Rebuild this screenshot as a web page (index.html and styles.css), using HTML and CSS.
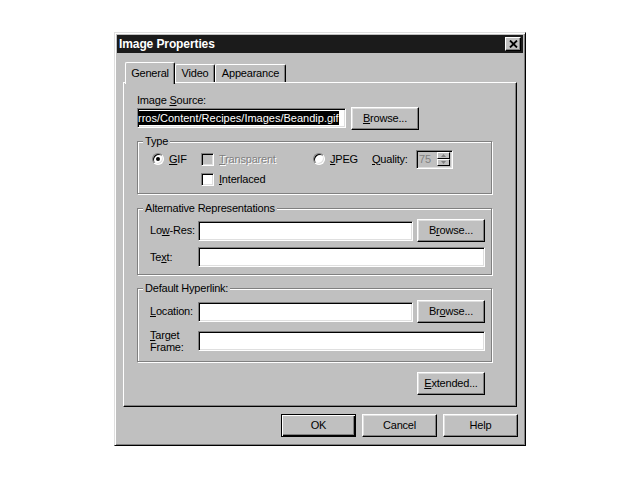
FILE: index.html
```html
<!DOCTYPE html>
<html>
<head>
<meta charset="utf-8">
<title>Image Properties</title>
<link rel="stylesheet" href="styles.css">
</head>
<body>
<div class="dialog">
  <div class="titlebar">
    <span class="title">Image Properties</span>
    <span class="close"><svg width="9" height="8" viewBox="0 0 9 8"><path d="M1 0.5 L8 7.5 M8 0.5 L1 7.5" stroke="#000" stroke-width="1.8" fill="none"/></svg></span>
  </div>
  <div class="main">
    <div class="tabs">
      <div class="tab active t-gen">General</div>
      <div class="tab t-vid">Video</div>
      <div class="tab t-app">Appearance</div>
    </div>
    <div class="panel">
      <div class="label-line">Image <u>S</u>ource:</div>
      <div class="src-row">
        <div class="edit src"><span class="sel">rros/Content/Recipes/Images/Beandip.gif</span></div>
        <div class="btn"><span><u>B</u>rowse...</span></div>
      </div>

      <div class="group g-type">
        <div class="legend">Type</div>
        <div class="trow r1">
          <div class="cell c1"><span class="radio on"></span><span><u>G</u>IF</span></div>
          <div class="cell c2"><span class="check disabled"></span><span class="dis-text"><u>T</u>ransparent</span></div>
          <div class="cell c3"><span class="radio"></span><span><u>J</u>PEG</span></div>
          <div class="cell c4"><span><u>Q</u>uality:</span></div>
          <div class="spin">
            <span class="spin-val">75</span>
            <span class="spin-btns">
              <span class="sb"><svg width="5" height="3" viewBox="0 0 5 3"><path d="M2.5 0 L5 3 L0 3 Z" fill="#808080"/></svg></span>
              <span class="sb"><svg width="5" height="3" viewBox="0 0 5 3"><path d="M0 0 L5 0 L2.5 3 Z" fill="#808080"/></svg></span>
            </span>
          </div>
        </div>
        <div class="trow r2">
          <div class="cell c1"></div>
          <div class="cell c2"><span class="check"></span><span><u>I</u>nterlaced</span></div>
        </div>
      </div>

      <div class="group g-alt">
        <div class="legend">Alternative Representations</div>
        <div class="frow fr1">
          <div class="flabel">Lo<u>w</u>-Res:</div>
          <div class="edit e-short"></div>
          <div class="btn"><span>B<u>r</u>owse...</span></div>
        </div>
        <div class="frow fr2">
          <div class="flabel">Te<u>x</u>t:</div>
          <div class="edit e-long"></div>
        </div>
      </div>

      <div class="group g-link">
        <div class="legend">Default Hyperlink:</div>
        <div class="frow fr1">
          <div class="flabel"><u>L</u>ocation:</div>
          <div class="edit e-short"></div>
          <div class="btn"><span>Br<u>o</u>wse...</span></div>
        </div>
        <div class="frow fr2 tall">
          <div class="flabel two"><u>T</u>arget<br>Frame:</div>
          <div class="edit e-long"></div>
        </div>
      </div>

      <div class="btn extended"><span><u>E</u>xtended...</span></div>
    </div>
    <div class="buttons">
      <div class="btn big default"><span>OK</span></div>
      <div class="btn big"><span>Cancel</span></div>
      <div class="btn big"><span>Help</span></div>
    </div>
  </div>
</div>
</body>
</html>
```
FILE: styles.css
```css
body {
  margin: 0;
  background: #fff;
  font-family: "Liberation Sans", Arial, sans-serif;
  font-size: 11px;
  line-height: 13px;
  letter-spacing: -0.2px;
  color: #000;
}

.dialog {
  box-sizing: border-box;
  width: 412px;
  height: 414px;
  margin: 32px 0 0 114px;
  background: #c0c0c0;
  border: 1px solid;
  border-color: #dfdfdf #000 #000 #dfdfdf;
  box-shadow: inset 1px 1px #fff, inset -1px -1px #808080;
  padding: 2px;
  display: flex;
  flex-direction: column;
}

.titlebar {
  height: 18px;
  background: #1b1b1b;
  color: #fff;
  display: flex;
  align-items: center;
  justify-content: space-between;
  padding: 0 2px;
  font-weight: bold;
  font-size: 12px;
  letter-spacing: -0.1px;
}

.close {
  box-sizing: border-box;
  width: 16px;
  height: 14px;
  background: #c0c0c0;
  border: 1px solid;
  border-color: #fff #000 #000 #fff;
  box-shadow: inset -1px -1px #808080;
  display: flex;
  align-items: center;
  justify-content: center;
}

.main {
  padding: 0 6px;
  display: flex;
  flex-direction: column;
}

.tabs {
  display: flex;
  align-items: flex-end;
  height: 20px;
  margin-top: 9px;
  padding-left: 2px;
}

.tab {
  box-sizing: border-box;
  height: 18px;
  padding-top: 2px;
  text-align: center;
  background: #c0c0c0;
  border-top: 1px solid #fff;
  border-left: 1px solid #fff;
  border-right: 1px solid #000;
  box-shadow: inset -1px 0 #808080;
  border-radius: 2px 2px 0 0;
}

.tab.active {
  height: 22px;
  margin-bottom: -2px;
  padding-top: 4px;
  position: relative;
  z-index: 1;
}

.t-gen { width: 50px; }
.t-vid { width: 40px; }
.t-app { width: 71px; }

.panel {
  box-sizing: border-box;
  height: 325px;
  border: 1px solid;
  border-color: #fff #000 #000 #fff;
  box-shadow: inset -1px -1px #808080;
  padding: 11px 24px 0 13px;
  display: flex;
  flex-direction: column;
}

.label-line { height: 13px; }

.src-row {
  display: flex;
  gap: 5px;
  height: 23px;
}

.edit {
  box-sizing: border-box;
  height: 20px;
  background: #fff;
  border: 1px solid;
  border-color: #808080 #fff #fff #808080;
  box-shadow: inset 1px 1px #000, inset -1px -1px #dfdfdf;
}

.src {
  width: 209px;
  margin-top: 1px;
  padding: 2px 3px 0 0;
  overflow: hidden;
  white-space: nowrap;
}

.sel {
  display: inline-block;
  background: #000;
  color: #fff;
  line-height: 14px;
  letter-spacing: 0;
}

.btn {
  box-sizing: border-box;
  width: 68px;
  height: 23px;
  background: #c0c0c0;
  border: 1px solid;
  border-color: #fff #000 #000 #fff;
  box-shadow: inset -1px -1px #808080, inset 1px 1px #dfdfdf;
  display: flex;
  align-items: center;
  justify-content: center;
  flex: none;
}

.group {
  box-sizing: border-box;
  border: 1px solid #808080;
  box-shadow: inset 1px 1px #fff, 1px 1px #fff;
}

.legend {
  width: max-content;
  margin: -7px 0 0 5px;
  padding: 0 2px;
  background: #c0c0c0;
  line-height: 13px;
}

.g-type { margin-top: 11px; padding-bottom: 4px; }
.g-alt { margin-top: 14px; padding-bottom: 7px; }
.g-link { margin-top: 13px; padding-bottom: 8px; }

.trow {
  display: flex;
  align-items: center;
  height: 20px;
  padding-left: 14px;
}
.trow.r1 { margin-top: 1px; }

.cell {
  display: flex;
  align-items: center;
  gap: 5px;
  flex: none;
}
.c1 { width: 49px; }
.c2 { width: 112px; }
.c3 { width: 59px; }
.c4 { width: 44px; }

.radio {
  box-sizing: border-box;
  width: 12px;
  height: 12px;
  border-radius: 50%;
  background: #fff;
  border: 1px solid;
  border-color: #808080 #fff #fff #808080;
  box-shadow: inset 1px 1px #000, inset -1px -1px #dfdfdf;
  display: flex;
  align-items: center;
  justify-content: center;
}
.radio.on::after {
  content: "";
  width: 4px;
  height: 4px;
  border-radius: 50%;
  background: #000;
}

.check {
  box-sizing: border-box;
  width: 13px;
  height: 13px;
  background: #fff;
  border: 1px solid;
  border-color: #808080 #fff #fff #808080;
  box-shadow: inset 1px 1px #000, inset -1px -1px #dfdfdf;
}
.check.disabled { background: #c0c0c0; }

.dis-text {
  color: #808080;
  text-shadow: 1px 1px #fff;
}

.spin {
  box-sizing: border-box;
  width: 37px;
  height: 19px;
  background: #c0c0c0;
  border: 1px solid;
  border-color: #808080 #fff #fff #808080;
  box-shadow: inset 1px 1px #000, inset -1px -1px #dfdfdf;
  display: flex;
  align-items: center;
  justify-content: space-between;
  padding: 1px 2px 1px 2px;
  flex: none;
}
.spin-val { color: #808080; }
.spin-btns {
  display: flex;
  flex-direction: column;
}
.sb {
  box-sizing: border-box;
  width: 13px;
  height: 7px;
  background: #c0c0c0;
  border: 1px solid;
  border-color: #fff #000 #000 #fff;
  display: flex;
  align-items: center;
  justify-content: center;
}

.frow {
  display: flex;
  align-items: center;
  padding-left: 12px;
}
.frow.fr1 { margin-top: 4px; height: 23px; }
.g-link .frow.fr1 { margin-top: 5px; }
.frow.fr2 { margin-top: 5px; height: 20px; }
.frow.fr2.tall { margin-top: 6px; height: 24px; }

.flabel {
  width: 48px;
  flex: none;
}
.flabel.two { line-height: 12px; }

.e-short { width: 215px; margin-right: 4px; }
.e-long { width: 287px; }

.extended {
  align-self: flex-end;
  margin-top: 10px;
  margin-right: 7px;
}

.buttons {
  display: flex;
  justify-content: flex-end;
  gap: 6px;
  margin-top: 7px;
  margin-right: -1px;
}
.btn.big { width: 75px; }
.btn.default {
  border-color: #000;
  box-shadow: inset 1px 1px #fff, inset -1px -1px #000, inset -2px -2px #808080;
}
```
